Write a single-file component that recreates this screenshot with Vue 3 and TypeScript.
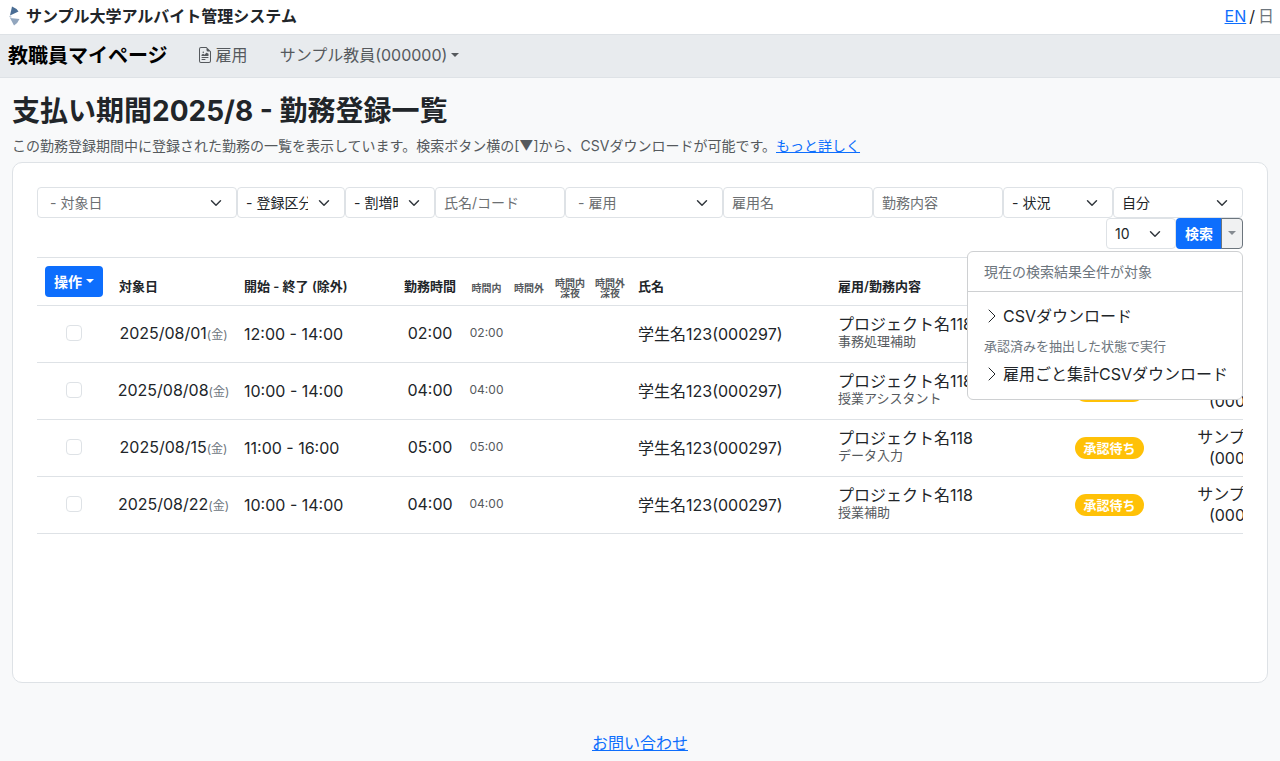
<script setup lang="ts">
import { ref } from 'vue'

interface Filter {
  id: string
  label: string
  kind: 'select' | 'input'
  size: string
  muted?: boolean
}

interface WorkRow {
  date: string
  time: string
  total: string
  regular: string
  duty: string
}

const filters: Filter[] = [
  { id: 'date', label: '- 対象日', kind: 'select', size: 'w200', muted: true },
  { id: 'category', label: '- 登録区分', kind: 'select', size: 'w108' },
  { id: 'extra', label: '- 割増時間', kind: 'select', size: 'w90' },
  { id: 'name', label: '氏名/コード', kind: 'input', size: 'w130' },
  { id: 'employment', label: '- 雇用', kind: 'select', size: 'w158', muted: true },
  { id: 'employment-name', label: '雇用名', kind: 'input', size: 'w150' },
  { id: 'duty', label: '勤務内容', kind: 'input', size: 'w130' },
  { id: 'status', label: '- 状況', kind: 'select', size: 'w110' },
  { id: 'owner', label: '自分', kind: 'select', size: 'w130' },
]

const rows: WorkRow[] = [
  { date: '2025/08/01', time: '12:00 - 14:00', total: '02:00', regular: '02:00', duty: '事務処理補助' },
  { date: '2025/08/08', time: '10:00 - 14:00', total: '04:00', regular: '04:00', duty: '授業アシスタント' },
  { date: '2025/08/15', time: '11:00 - 16:00', total: '05:00', regular: '05:00', duty: 'データ入力' },
  { date: '2025/08/22', time: '10:00 - 14:00', total: '04:00', regular: '04:00', duty: '授業補助' },
]

const menuOpen = ref(true)
</script>

<template>
  <div class="page">
    <header class="topbar">
      <div class="brand">
        <svg class="logo" width="12" height="20" viewBox="0 0 12 20" aria-hidden="true">
          <path d="M4 .5Q8 2 10.500 5.500L2 9.500Z" fill="#4a6d94" />
          <path d="M2 9.500 1 10.500 2.500 12 4 11Z" fill="#c3cfdc" />
          <path d="M2 12 11.500 13Q10 17 6 19.500Z" fill="#92a6be" />
        </svg>
        <span>サンプル大学アルバイト管理システム</span>
      </div>
      <div class="lang"><a href="#en">EN</a><span>/</span><span class="current">日</span></div>
    </header>

    <nav class="navbar">
      <a class="nav-title" href="#top">教職員マイページ</a>
      <a class="nav-link" href="#employment">
        <svg width="16" height="16" viewBox="0 0 16 16" fill="currentColor" aria-hidden="true">
          <path d="M14 4.5V14a2 2 0 0 1-2 2H4a2 2 0 0 1-2-2V2a2 2 0 0 1 2-2h5.5zm-3 0A1.5 1.5 0 0 1 9.5 3V1H4a1 1 0 0 0-1 1v12a1 1 0 0 0 1 1h8a1 1 0 0 0 1-1V4.5z" />
          <path d="M4.5 12.5A.5.5 0 0 1 5 12h3a.5.5 0 0 1 0 1H5a.5.5 0 0 1-.5-.5m0-2A.5.5 0 0 1 5 10h6a.5.5 0 0 1 0 1H5a.5.5 0 0 1-.5-.5m1.639-3.708 1.33.886 1.854-1.855a.25.25 0 0 1 .289-.047l1.888.974V8.5a.5.5 0 0 1-.5.5H5a.5.5 0 0 1-.5-.5V8s1.54-1.274 1.639-1.208M6.25 6a.75.75 0 1 0 0-1.5.75.75 0 0 0 0 1.5" />
        </svg>
        <span>雇用</span>
      </a>
      <button type="button" class="nav-user caret">サンプル教員(000000)</button>
    </nav>

    <main class="content">
      <h1>支払い期間2025/8 - 勤務登録一覧</h1>
      <p class="lead">この勤務登録期間中に登録された勤務の一覧を表示しています。検索ボタン横の[▼]から、CSVダウンロードが可能です。<a href="#more">もっと詳しく</a></p>

      <section class="card">
        <form class="filters" @submit.prevent>
          <template v-for="f in filters" :key="f.id">
            <select v-if="f.kind === 'select'" :id="f.id" :aria-label="f.label" class="field select" :class="[f.size, { muted: f.muted }]">
              <option>{{ f.label }}</option>
            </select>
            <input v-else :id="f.id" type="text" :aria-label="f.label" :placeholder="f.label" class="field" :class="f.size" />
          </template>
          <select id="per-page" aria-label="表示件数" class="field select w70">
            <option>10</option>
          </select>
          <div class="search-group">
            <button type="submit" class="search">検索</button>
            <button type="button" class="toggle caret" aria-label="メニュー" :aria-expanded="menuOpen" @click="menuOpen = !menuOpen"></button>
            <div v-if="menuOpen" class="menu">
              <div class="menu-head">現在の検索結果全件が対象</div>
              <div class="menu-body">
                <a class="menu-item" href="#csv">
                  <svg width="16" height="16" viewBox="0 0 16 16" aria-hidden="true"><path d="M5 2l6 6-6 6" /></svg>
                  <span>CSVダウンロード</span>
                </a>
                <div class="menu-note">承認済みを抽出した状態で実行</div>
                <a class="menu-item" href="#csv-summary">
                  <svg width="16" height="16" viewBox="0 0 16 16" aria-hidden="true"><path d="M5 2l6 6-6 6" /></svg>
                  <span>雇用ごと集計CSVダウンロード</span>
                </a>
              </div>
            </div>
          </div>
        </form>

        <div class="table-wrap">
          <table>
            <colgroup>
              <col class="c-check" /><col class="c-date" /><col class="c-time" /><col class="c-total" />
              <col class="c-reg" /><col class="c-over" /><col class="c-night" /><col class="c-night" />
              <col class="c-name" /><col class="c-job" /><col class="c-status" /><col class="c-owner" />
            </colgroup>
            <thead>
              <tr>
                <th class="op"><button type="button" class="action caret">操作</button></th>
                <th>対象日</th>
                <th>開始 - 終了 (除外)</th>
                <th class="center">勤務時間</th>
                <th class="tiny">時間内</th>
                <th class="tiny">時間外</th>
                <th class="tiny">時間内<br />深夜</th>
                <th class="tiny">時間外<br />深夜</th>
                <th>氏名</th>
                <th>雇用/勤務内容</th>
                <th class="center">状況</th>
                <th></th>
              </tr>
            </thead>
            <tbody>
              <tr v-for="row in rows" :key="row.date">
                <td class="pick"><input type="checkbox" class="check" :aria-label="row.date" /></td>
                <td class="center date">{{ row.date }}<small>(金)</small></td>
                <td>{{ row.time }}</td>
                <td class="total">{{ row.total }}</td>
                <td class="regular">{{ row.regular }}</td>
                <td></td>
                <td></td>
                <td></td>
                <td>学生名123(000297)</td>
                <td class="job">プロジェクト名118<div class="duty">{{ row.duty }}</div></td>
                <td class="center"><span class="badge">承認待ち</span></td>
                <td class="center">サンプル教員<br />(000000)</td>
              </tr>
            </tbody>
          </table>
        </div>
      </section>
    </main>

    <footer><a href="#contact">お問い合わせ</a></footer>
  </div>
</template>

<style>
body {
  margin: 0;
  background: #f8f9fa;
}
</style>

<style scoped>
* {
  box-sizing: border-box;
}
.page {
  min-height: 100vh;
  background: #f8f9fa;
  color: #212529;
  font-family: Inter, "Noto Sans CJK JP", sans-serif;
  font-size: 16px;
  line-height: 24px;
}
a {
  color: #0d6efd;
}
button,
input,
select {
  font-family: inherit;
}
svg {
  flex-shrink: 0;
}
.topbar {
  display: flex;
  justify-content: space-between;
  align-items: center;
  height: 35px;
  padding: 0 6px 2px 8px;
  background: #fff;
  border-bottom: 1px solid #dee2e6;
}
.brand {
  display: flex;
  align-items: center;
  gap: 6px;
  font-weight: 600;
}
.lang {
  display: flex;
  gap: 3px;
}
.current {
  color: #6c757d;
}
.navbar {
  display: flex;
  align-items: center;
  height: 43px;
  padding: 0 8px;
  background: #e8ebee;
  border-bottom: 1px solid #dee2e6;
}
.nav-title {
  margin-right: 29px;
  color: #000;
  font-size: 20px;
  font-weight: 600;
  text-decoration: none;
}
.nav-link {
  display: flex;
  align-items: center;
  gap: 3px;
  margin-right: 32px;
  padding-bottom: 2px;
  color: #55595d;
  text-decoration: none;
}
.nav-user {
  padding: 0 0 2px;
  border: 0;
  background: none;
  color: #55595d;
  font-size: 16px;
  line-height: 24px;
}
.caret::after {
  content: "";
  display: inline-block;
  margin-left: 4px;
  vertical-align: 4px;
  border-top: 4px solid;
  border-left: 4px solid transparent;
  border-right: 4px solid transparent;
}
.content {
  padding: 16px 12px 0;
}
h1 {
  margin: 0 0 7px;
  font-size: 28px;
  line-height: 34px;
  font-weight: 700;
}
.lead {
  margin: 0 0 6px;
  color: #55595d;
  font-size: 14px;
  line-height: 21px;
}
.card {
  min-height: 521px;
  padding: 24px;
  background: #fff;
  border: 1px solid #dee2e6;
  border-radius: 10px;
}
.filters {
  display: flex;
  flex-wrap: wrap;
  justify-content: flex-end;
}
.field {
  height: 31px;
  padding: 0 8px 1px;
  border: 1px solid #dee2e6;
  border-radius: 4px;
  background: #fff;
  color: #212529;
  font-size: 14px;
}
.field::placeholder {
  color: #6c6f72;
  opacity: 1;
}
.select {
  appearance: none;
  padding-right: 36px;
  background: #fff url("data:image/svg+xml,%3Csvg xmlns='http://www.w3.org/2000/svg' viewBox='0 0 16 16'%3E%3Cpath fill='none' stroke='%23343a40' stroke-linecap='round' stroke-linejoin='round' stroke-width='2' d='m2 5 6 6 6-6'/%3E%3C/svg%3E") no-repeat right 12px center / 16px 12px;
}
.muted {
  padding-left: 12px;
  color: #6c6f72;
}
.w200 { width: 200px; }
.w158 { width: 158px; }
.w150 { width: 150px; }
.w130 { width: 130px; }
.w110 { width: 110px; }
.w108 { width: 108px; }
.w90 { width: 90px; }
.w70 { width: 70px; }
.search-group {
  position: relative;
  display: flex;
}
.search {
  width: 46px;
  height: 31px;
  padding: 0 0 2px;
  border: 0;
  border-radius: 4px 0 0 4px;
  background: #0d6efd;
  color: #fff;
  font-size: 14px;
  font-weight: 600;
}
.toggle {
  width: 22px;
  height: 31px;
  margin-left: -1px;
  padding: 0;
  border: 1px solid #6c757d;
  border-radius: 0 4px 4px 0;
  background: #f0f1f2;
  color: #858b91;
}
.toggle::after {
  margin-left: 0;
}
.menu {
  position: absolute;
  z-index: 2;
  top: 33px;
  right: 0;
  width: 276px;
  background: #fff;
  border: 1px solid #ced0d2;
  border-radius: 6px;
  white-space: nowrap;
}
.menu-head {
  padding: 8px 16px;
  border-bottom: 1px solid #ced0d2;
  color: #6c757d;
  font-size: 14px;
  line-height: 23px;
}
.menu-body {
  padding: 8px 0 9px;
}
.menu-item {
  display: flex;
  align-items: center;
  gap: 3px;
  padding: 4px 16px;
  color: #212529;
  text-decoration: none;
}
.menu-item path {
  fill: none;
  stroke: currentColor;
  stroke-linecap: round;
  stroke-linejoin: round;
}
.menu-note {
  padding: 4px 16px 2px;
  color: #6c757d;
  font-size: 13px;
  line-height: 20px;
}
.table-wrap {
  margin-top: 8px;
  overflow-x: auto;
  scrollbar-width: none;
}
table {
  width: 1264px;
  table-layout: fixed;
  border-collapse: separate;
  border-spacing: 0;
  border-top: 1px solid #dee2e6;
}
.c-check { width: 74px; }
.c-date { width: 125px; }
.c-time { width: 159px; }
.c-total { width: 70px; }
.c-reg { width: 43px; }
.c-over { width: 42px; }
.c-night { width: 40px; }
.c-name { width: 200px; }
.c-job { width: 200px; }
.c-status { width: 159px; }
.c-owner { width: 112px; }
th,
td {
  padding: 0 8px;
  border-bottom: 1px solid #dee2e6;
  text-align: left;
  white-space: nowrap;
}
th {
  height: 48px;
  padding-top: 8px;
  font-size: 13px;
  font-weight: 600;
}
th.op {
  padding-top: 0;
}
td {
  height: 57px;
  line-height: 21px;
}
th.center,
td.center {
  text-align: center;
}
th.tiny {
  padding: 12px 0 0;
  color: #55595d;
  font-size: 10px;
  line-height: 10px;
  text-align: center;
}
td.pick {
  padding: 0 8px 2px;
}
td.date {
  padding: 0;
}
td.total {
  padding: 0 0 2px;
  text-align: center;
}
small {
  color: #6c757d;
  font-size: 12px;
}
td.regular {
  padding: 0 0 4px;
  color: #55595d;
  font-size: 12px;
  text-align: center;
}
td.job {
  padding-bottom: 6px;
}
.duty {
  color: #55595d;
  font-size: 13px;
  line-height: 13px;
}
.action {
  width: 58px;
  height: 31px;
  padding: 0 0 2px;
  border: 0;
  border-radius: 4px;
  background: #0d6efd;
  color: #fff;
  font-size: 14px;
  font-weight: 600;
}
.check {
  appearance: none;
  display: block;
  width: 16px;
  height: 16px;
  margin: 0 auto;
  border: 1px solid #dee2e6;
  border-radius: 4px;
  background: #fff;
}
.check:checked {
  background: #0d6efd;
}
.badge {
  display: inline-block;
  padding: 0 8px;
  border-radius: 11px;
  background: #ffc107;
  color: #fff;
  font-size: 13px;
  line-height: 22px;
  font-weight: 700;
}
footer {
  padding: 48px 12px 6px;
  text-align: center;
}
</style>
